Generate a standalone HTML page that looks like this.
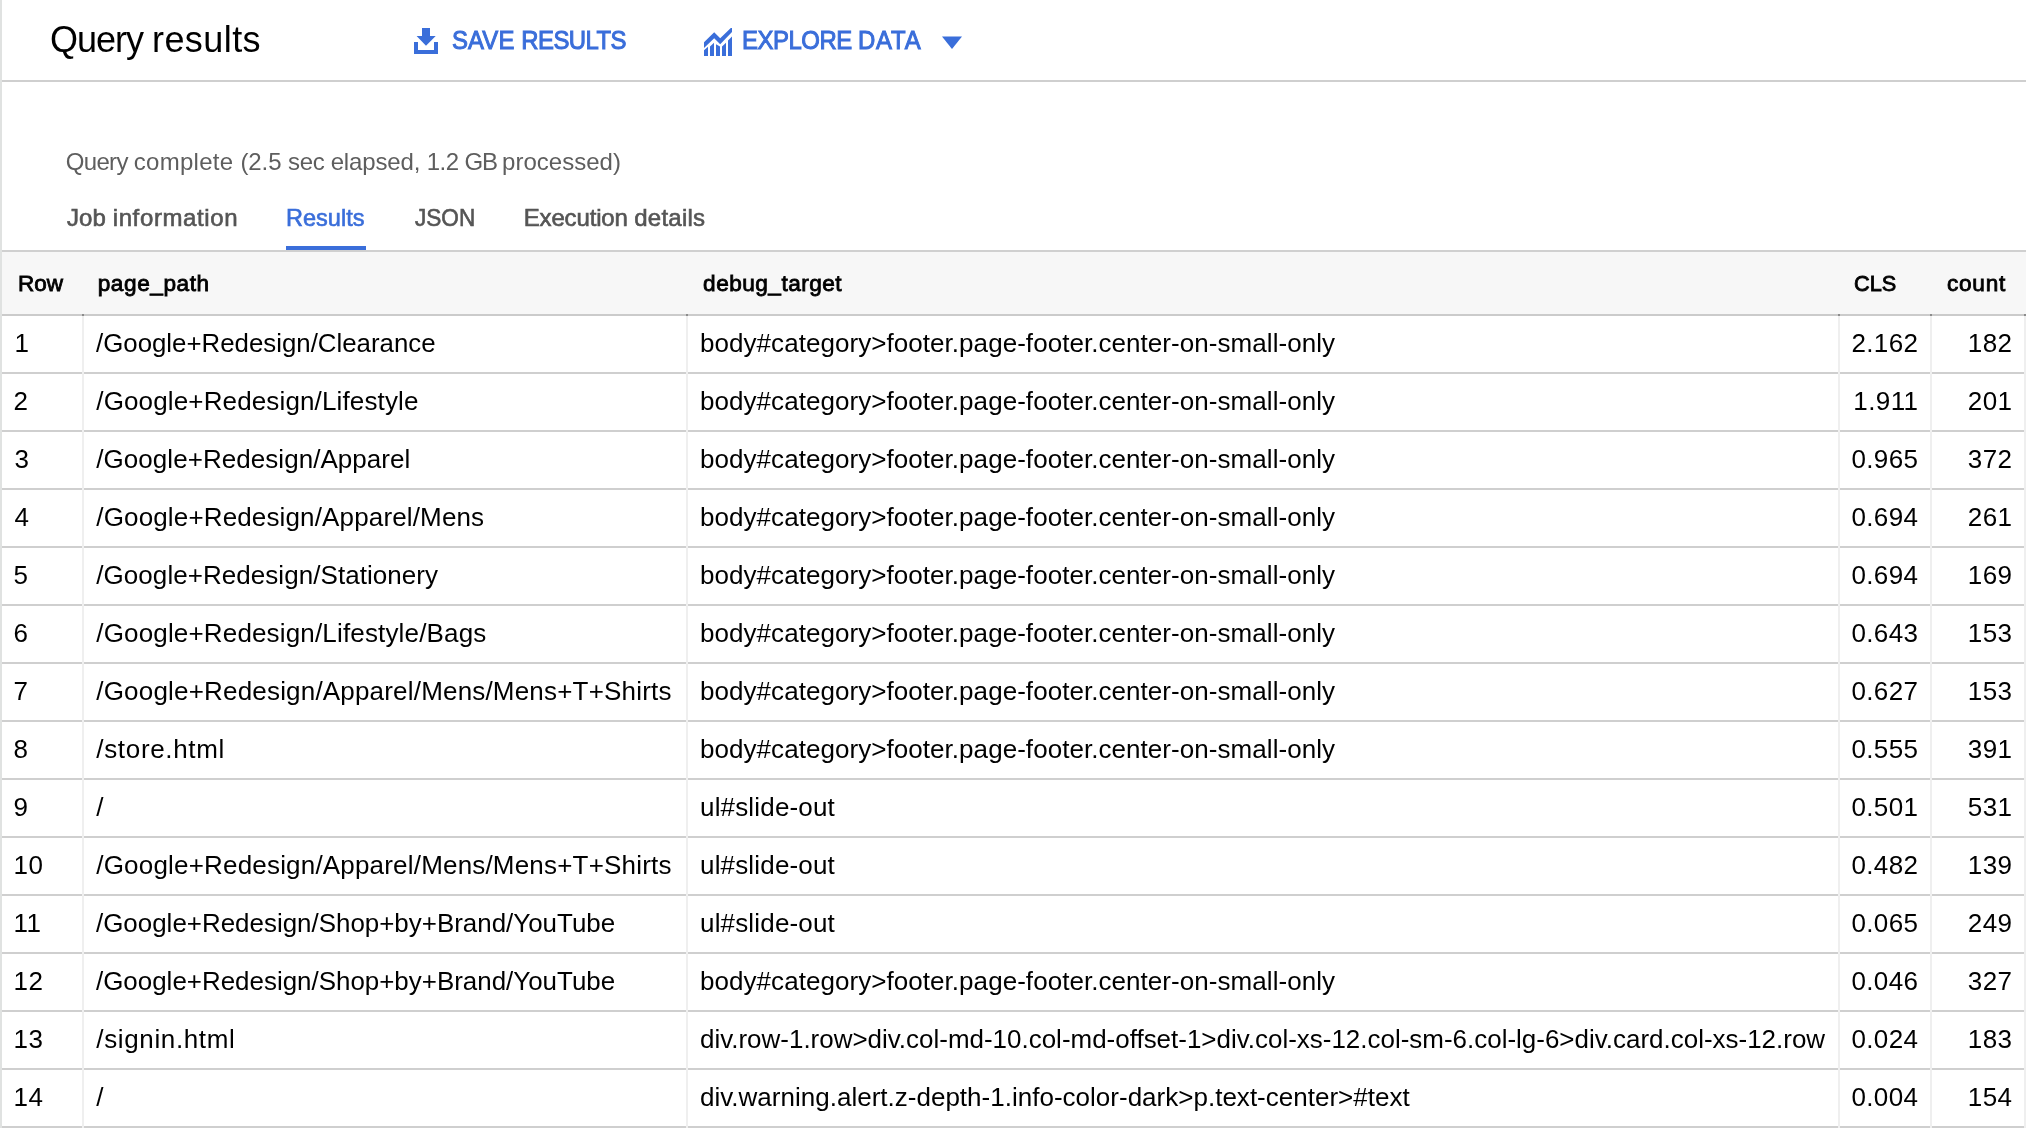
<!DOCTYPE html>
<html lang="en"><head><meta charset="utf-8"><title>Query results</title>
<style>
html,body{margin:0;padding:0;background:#fff}
body{width:2026px;height:1128px;position:relative;overflow:hidden;font-family:"Liberation Sans", Arial, sans-serif;color:#000}
.b{position:absolute;display:block}
.txt{position:absolute;left:0;top:0;width:2026px;height:1128px;will-change:transform}
.t{position:absolute;white-space:pre;margin:0;padding:0;transform-origin:0 0}
.title{color:#000}
.btn{color:#3a6eda;-webkit-text-stroke:1px #3a6eda}
.status{color:#5e5e5e}
.tab{color:#555555;-webkit-text-stroke:0.62px #555555}
.tab.on{color:#3a6eda;-webkit-text-stroke:0.62px #3a6eda}
.th{color:#000;-webkit-text-stroke:0.85px #000}
.td{color:#000}
</style></head>
<body>
<div class="b" style="left:0;top:0;width:2px;height:1128px;background:#e0e2e1"></div>
<div class="b" style="left:2px;top:80px;width:2024px;height:2px;background:#cfcfcf"></div>
<div class="b" style="left:2px;top:250px;width:2024px;height:2px;background:#d0d0d0"></div>
<div class="b" style="left:2px;top:252px;width:2024px;height:62px;background:#f7f7f7"></div>
<div class="b" style="left:286px;top:246px;width:80px;height:4px;background:#3a6eda"></div>
<div class="b" style="left:2px;top:314px;width:2024px;height:2px;background:#cbcbcb"></div>
<div class="b" style="left:2px;top:372px;width:2024px;height:2px;background:#cfcfcf"></div>
<div class="b" style="left:2px;top:430px;width:2024px;height:2px;background:#cfcfcf"></div>
<div class="b" style="left:2px;top:488px;width:2024px;height:2px;background:#cfcfcf"></div>
<div class="b" style="left:2px;top:546px;width:2024px;height:2px;background:#cfcfcf"></div>
<div class="b" style="left:2px;top:604px;width:2024px;height:2px;background:#cfcfcf"></div>
<div class="b" style="left:2px;top:662px;width:2024px;height:2px;background:#cfcfcf"></div>
<div class="b" style="left:2px;top:720px;width:2024px;height:2px;background:#cfcfcf"></div>
<div class="b" style="left:2px;top:778px;width:2024px;height:2px;background:#cfcfcf"></div>
<div class="b" style="left:2px;top:836px;width:2024px;height:2px;background:#cfcfcf"></div>
<div class="b" style="left:2px;top:894px;width:2024px;height:2px;background:#cfcfcf"></div>
<div class="b" style="left:2px;top:952px;width:2024px;height:2px;background:#cfcfcf"></div>
<div class="b" style="left:2px;top:1010px;width:2024px;height:2px;background:#cfcfcf"></div>
<div class="b" style="left:2px;top:1068px;width:2024px;height:2px;background:#cfcfcf"></div>
<div class="b" style="left:2px;top:1126px;width:2024px;height:2px;background:#cfcfcf"></div>
<div class="b" style="left:82px;top:316px;width:2px;height:812px;background:#efefef"></div>
<div class="b" style="left:82px;top:314px;width:2px;height:2px;background:#8c8c8c"></div>
<div class="b" style="left:686px;top:316px;width:2px;height:812px;background:#efefef"></div>
<div class="b" style="left:686px;top:314px;width:2px;height:2px;background:#8c8c8c"></div>
<div class="b" style="left:1838px;top:316px;width:2px;height:812px;background:#efefef"></div>
<div class="b" style="left:1838px;top:314px;width:2px;height:2px;background:#8c8c8c"></div>
<div class="b" style="left:1930px;top:316px;width:2px;height:812px;background:#efefef"></div>
<div class="b" style="left:1930px;top:314px;width:2px;height:2px;background:#8c8c8c"></div>
<div class="b" style="left:2024px;top:316px;width:2px;height:812px;background:#efefef"></div>
<div class="b" style="left:2024px;top:314px;width:2px;height:2px;background:#8c8c8c"></div>

<svg class="b" style="left:414px;top:28px" width="24" height="26" viewBox="0 0 24 26"><path fill="#3a6eda" d="M8 0h8v8h5.7L12 17.8 2.6 8H8zM0 14h4v8h16v-8h4v12H0z"/></svg>
<svg class="b" style="left:704px;top:28px" width="28" height="28" viewBox="0 0 28 28"><path fill="#3a6eda" d="M0 14.2L10.2 4.2l6 6L26.8 0H28v4L16.2 16.2l-6-6L0 20zM0 22.2l4-3.4V28H0zM6 18.6l4-3.8V28H6zM12 16.2l4 2.2V28h-4zM18 18.4l4-3.6V28h-4zM24 12.4l4-3.8V28h-4z"/></svg>
<svg class="b" style="left:942px;top:36px" width="20" height="13" viewBox="0 0 20 13"><path fill="#3a6eda" d="M0 0.5h20L10 13z"/></svg>

<div class="txt">
<div class="t title" style="left:49.90px;top:21.83px;font-size:36px;line-height:36px;"><span style="letter-spacing:-0.989px">Query </span><span style="letter-spacing:0.428px">results</span></div>
<div class="t btn" style="left:451.58px;top:27.09px;font-size:26px;line-height:26px;transform:translateY(-0.4px) scaleX(0.9200);"><span style="letter-spacing:0.129px">SAVE </span><span style="letter-spacing:-0.597px">RESULTS</span></div>
<div class="t btn" style="left:742.06px;top:27.09px;font-size:26px;line-height:26px;transform:translateY(-0.4px) scaleX(0.9200);"><span style="letter-spacing:-0.495px">EXPLORE </span><span style="letter-spacing:0.902px">DATA</span></div>
<div class="t status" style="left:65.70px;top:150.28px;font-size:24px;line-height:24px;"><span style="letter-spacing:-0.654px">Query </span><span style="letter-spacing:0.283px">complete </span><span style="letter-spacing:-0.085px">(2.5 </span><span style="letter-spacing:-0.354px">sec </span><span style="letter-spacing:-0.145px">elapsed, </span><span style="letter-spacing:-0.558px">1.2 </span><span style="letter-spacing:-1.281px">GB </span><span style="letter-spacing:0.019px">processed)</span></div>
<div class="t tab" style="left:66.91px;top:206.18px;font-size:24px;line-height:24px;"><span style="letter-spacing:0.107px">Job </span><span style="letter-spacing:0.621px">information</span></div>
<div class="t tab on" style="left:286.23px;top:206.18px;font-size:24px;line-height:24px;transform:scaleX(0.9804);">Results</div>
<div class="t tab" style="left:414.71px;top:206.18px;font-size:24px;line-height:24px;transform:scaleX(0.9410);">JSON</div>
<div class="t tab" style="left:523.71px;top:206.18px;font-size:24px;line-height:24px;"><span style="letter-spacing:-0.148px">Execution </span><span style="letter-spacing:0.219px">details</span></div>
<div class="t th" style="left:17.93px;top:273.07px;font-size:22.6px;line-height:22.6px;transform:scaleX(0.9948);">Row</div>
<div class="t th" style="left:97.72px;top:273.07px;font-size:22.6px;line-height:22.6px;letter-spacing:0.577px;">page_path</div>
<div class="t th" style="left:703.12px;top:273.07px;font-size:22.6px;line-height:22.6px;letter-spacing:0.487px;">debug_target</div>
<div class="t th" style="left:1854.36px;top:273.07px;font-size:22.6px;line-height:22.6px;transform:scaleX(0.9619);">CLS</div>
<div class="t th" style="left:1947.02px;top:273.07px;font-size:22.6px;line-height:22.6px;letter-spacing:0.739px;">count</div>
<div class="t td" style="left:14.50px;top:330.09px;font-size:26px;line-height:26px;letter-spacing:0.500px;">1</div>
<div class="t td" style="left:96.30px;top:330.09px;font-size:26px;line-height:26px;transform:scaleX(0.9933);">/Google+Redesign/Clearance</div>
<div class="t td" style="left:700.00px;top:330.09px;font-size:26px;line-height:26px;letter-spacing:0.052px;">body#category&gt;footer.page-footer.center-on-small-only</div>
<div class="t td" style="left:1851.40px;top:330.09px;font-size:26px;line-height:26px;letter-spacing:0.400px;">2.162</div>
<div class="t td" style="left:1967.68px;top:330.09px;font-size:26px;line-height:26px;letter-spacing:0.500px;">182</div>
<div class="t td" style="left:13.50px;top:388.09px;font-size:26px;line-height:26px;letter-spacing:0.500px;">2</div>
<div class="t td" style="left:96.30px;top:388.09px;font-size:26px;line-height:26px;letter-spacing:0.138px;">/Google+Redesign/Lifestyle</div>
<div class="t td" style="left:700.00px;top:388.09px;font-size:26px;line-height:26px;letter-spacing:0.052px;">body#category&gt;footer.page-footer.center-on-small-only</div>
<div class="t td" style="left:1853.33px;top:388.09px;font-size:26px;line-height:26px;letter-spacing:0.400px;">1.911</div>
<div class="t td" style="left:1967.68px;top:388.09px;font-size:26px;line-height:26px;letter-spacing:0.500px;">201</div>
<div class="t td" style="left:14.50px;top:446.09px;font-size:26px;line-height:26px;letter-spacing:0.500px;">3</div>
<div class="t td" style="left:96.30px;top:446.09px;font-size:26px;line-height:26px;letter-spacing:0.049px;">/Google+Redesign/Apparel</div>
<div class="t td" style="left:700.00px;top:446.09px;font-size:26px;line-height:26px;letter-spacing:0.052px;">body#category&gt;footer.page-footer.center-on-small-only</div>
<div class="t td" style="left:1851.40px;top:446.09px;font-size:26px;line-height:26px;letter-spacing:0.400px;">0.965</div>
<div class="t td" style="left:1967.68px;top:446.09px;font-size:26px;line-height:26px;letter-spacing:0.500px;">372</div>
<div class="t td" style="left:14.50px;top:504.09px;font-size:26px;line-height:26px;letter-spacing:0.500px;">4</div>
<div class="t td" style="left:96.30px;top:504.09px;font-size:26px;line-height:26px;letter-spacing:0.145px;">/Google+Redesign/Apparel/Mens</div>
<div class="t td" style="left:700.00px;top:504.09px;font-size:26px;line-height:26px;letter-spacing:0.052px;">body#category&gt;footer.page-footer.center-on-small-only</div>
<div class="t td" style="left:1851.40px;top:504.09px;font-size:26px;line-height:26px;letter-spacing:0.400px;">0.694</div>
<div class="t td" style="left:1967.68px;top:504.09px;font-size:26px;line-height:26px;letter-spacing:0.500px;">261</div>
<div class="t td" style="left:13.50px;top:562.09px;font-size:26px;line-height:26px;letter-spacing:0.500px;">5</div>
<div class="t td" style="left:96.30px;top:562.09px;font-size:26px;line-height:26px;letter-spacing:0.051px;">/Google+Redesign/Stationery</div>
<div class="t td" style="left:700.00px;top:562.09px;font-size:26px;line-height:26px;letter-spacing:0.052px;">body#category&gt;footer.page-footer.center-on-small-only</div>
<div class="t td" style="left:1851.40px;top:562.09px;font-size:26px;line-height:26px;letter-spacing:0.400px;">0.694</div>
<div class="t td" style="left:1967.68px;top:562.09px;font-size:26px;line-height:26px;letter-spacing:0.500px;">169</div>
<div class="t td" style="left:13.50px;top:620.09px;font-size:26px;line-height:26px;letter-spacing:0.500px;">6</div>
<div class="t td" style="left:96.30px;top:620.09px;font-size:26px;line-height:26px;letter-spacing:0.160px;">/Google+Redesign/Lifestyle/Bags</div>
<div class="t td" style="left:700.00px;top:620.09px;font-size:26px;line-height:26px;letter-spacing:0.052px;">body#category&gt;footer.page-footer.center-on-small-only</div>
<div class="t td" style="left:1851.40px;top:620.09px;font-size:26px;line-height:26px;letter-spacing:0.400px;">0.643</div>
<div class="t td" style="left:1967.68px;top:620.09px;font-size:26px;line-height:26px;letter-spacing:0.500px;">153</div>
<div class="t td" style="left:13.50px;top:678.09px;font-size:26px;line-height:26px;letter-spacing:0.500px;">7</div>
<div class="t td" style="left:96.30px;top:678.09px;font-size:26px;line-height:26px;letter-spacing:0.187px;">/Google+Redesign/Apparel/Mens/Mens+T+Shirts</div>
<div class="t td" style="left:700.00px;top:678.09px;font-size:26px;line-height:26px;letter-spacing:0.052px;">body#category&gt;footer.page-footer.center-on-small-only</div>
<div class="t td" style="left:1851.40px;top:678.09px;font-size:26px;line-height:26px;letter-spacing:0.400px;">0.627</div>
<div class="t td" style="left:1967.68px;top:678.09px;font-size:26px;line-height:26px;letter-spacing:0.500px;">153</div>
<div class="t td" style="left:13.50px;top:736.09px;font-size:26px;line-height:26px;letter-spacing:0.500px;">8</div>
<div class="t td" style="left:96.30px;top:736.09px;font-size:26px;line-height:26px;letter-spacing:0.671px;">/store.html</div>
<div class="t td" style="left:700.00px;top:736.09px;font-size:26px;line-height:26px;letter-spacing:0.052px;">body#category&gt;footer.page-footer.center-on-small-only</div>
<div class="t td" style="left:1851.40px;top:736.09px;font-size:26px;line-height:26px;letter-spacing:0.400px;">0.555</div>
<div class="t td" style="left:1967.68px;top:736.09px;font-size:26px;line-height:26px;letter-spacing:0.500px;">391</div>
<div class="t td" style="left:13.50px;top:794.09px;font-size:26px;line-height:26px;letter-spacing:0.500px;">9</div>
<div class="t td" style="left:96.30px;top:794.09px;font-size:26px;line-height:26px;">/</div>
<div class="t td" style="left:700.00px;top:794.09px;font-size:26px;line-height:26px;letter-spacing:0.168px;">ul#slide-out</div>
<div class="t td" style="left:1851.40px;top:794.09px;font-size:26px;line-height:26px;letter-spacing:0.400px;">0.501</div>
<div class="t td" style="left:1967.68px;top:794.09px;font-size:26px;line-height:26px;letter-spacing:0.500px;">531</div>
<div class="t td" style="left:13.50px;top:852.09px;font-size:26px;line-height:26px;letter-spacing:0.500px;">10</div>
<div class="t td" style="left:96.30px;top:852.09px;font-size:26px;line-height:26px;letter-spacing:0.187px;">/Google+Redesign/Apparel/Mens/Mens+T+Shirts</div>
<div class="t td" style="left:700.00px;top:852.09px;font-size:26px;line-height:26px;letter-spacing:0.168px;">ul#slide-out</div>
<div class="t td" style="left:1851.40px;top:852.09px;font-size:26px;line-height:26px;letter-spacing:0.400px;">0.482</div>
<div class="t td" style="left:1967.68px;top:852.09px;font-size:26px;line-height:26px;letter-spacing:0.500px;">139</div>
<div class="t td" style="left:13.50px;top:910.09px;font-size:26px;line-height:26px;letter-spacing:0.500px;">11</div>
<div class="t td" style="left:96.30px;top:910.09px;font-size:26px;line-height:26px;transform:scaleX(0.9971);">/Google+Redesign/Shop+by+Brand/YouTube</div>
<div class="t td" style="left:700.00px;top:910.09px;font-size:26px;line-height:26px;letter-spacing:0.168px;">ul#slide-out</div>
<div class="t td" style="left:1851.40px;top:910.09px;font-size:26px;line-height:26px;letter-spacing:0.400px;">0.065</div>
<div class="t td" style="left:1967.68px;top:910.09px;font-size:26px;line-height:26px;letter-spacing:0.500px;">249</div>
<div class="t td" style="left:13.50px;top:968.09px;font-size:26px;line-height:26px;letter-spacing:0.500px;">12</div>
<div class="t td" style="left:96.30px;top:968.09px;font-size:26px;line-height:26px;transform:scaleX(0.9971);">/Google+Redesign/Shop+by+Brand/YouTube</div>
<div class="t td" style="left:700.00px;top:968.09px;font-size:26px;line-height:26px;letter-spacing:0.052px;">body#category&gt;footer.page-footer.center-on-small-only</div>
<div class="t td" style="left:1851.40px;top:968.09px;font-size:26px;line-height:26px;letter-spacing:0.400px;">0.046</div>
<div class="t td" style="left:1967.68px;top:968.09px;font-size:26px;line-height:26px;letter-spacing:0.500px;">327</div>
<div class="t td" style="left:13.50px;top:1026.09px;font-size:26px;line-height:26px;letter-spacing:0.500px;">13</div>
<div class="t td" style="left:96.30px;top:1026.09px;font-size:26px;line-height:26px;letter-spacing:0.634px;">/signin.html</div>
<div class="t td" style="left:700.00px;top:1026.09px;font-size:26px;line-height:26px;transform:scaleX(0.9985);">div.row-1.row&gt;div.col-md-10.col-md-offset-1&gt;div.col-xs-12.col-sm-6.col-lg-6&gt;div.card.col-xs-12.row</div>
<div class="t td" style="left:1851.40px;top:1026.09px;font-size:26px;line-height:26px;letter-spacing:0.400px;">0.024</div>
<div class="t td" style="left:1967.68px;top:1026.09px;font-size:26px;line-height:26px;letter-spacing:0.500px;">183</div>
<div class="t td" style="left:13.50px;top:1084.09px;font-size:26px;line-height:26px;letter-spacing:0.500px;">14</div>
<div class="t td" style="left:96.30px;top:1084.09px;font-size:26px;line-height:26px;">/</div>
<div class="t td" style="left:700.00px;top:1084.09px;font-size:26px;line-height:26px;letter-spacing:0.010px;">div.warning.alert.z-depth-1.info-color-dark&gt;p.text-center&gt;#text</div>
<div class="t td" style="left:1851.40px;top:1084.09px;font-size:26px;line-height:26px;letter-spacing:0.400px;">0.004</div>
<div class="t td" style="left:1967.68px;top:1084.09px;font-size:26px;line-height:26px;letter-spacing:0.500px;">154</div>
</div>
</body></html>
